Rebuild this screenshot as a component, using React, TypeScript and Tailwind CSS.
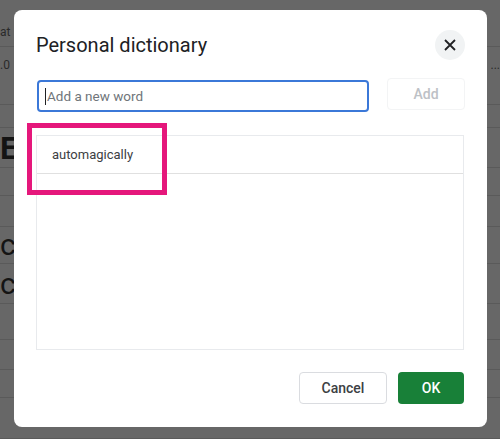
import React from "react";

const sheetRows = [
  { h: 47, left: "at", right: "", align: "items-end pb-[8px]" },
  { h: 58, left: ".0", right: "...", align: "items-start pt-[12px]" },
  { h: 23, left: "", right: "", align: "items-center" },
  { h: 40, left: "E", right: "", big: true, bold: true, align: "items-center" },
  { h: 28, left: "", right: "", align: "items-center" },
  { h: 31, left: "", right: "", align: "items-center" },
  { h: 37, left: "ca", right: "", big: true, align: "items-center" },
  { h: 40, left: "ca", right: "", big: true, align: "items-center" },
  { h: 36, left: "", right: "", align: "items-center" },
  { h: 30, left: "", right: "", align: "items-center" },
  { h: 28, left: "", right: "", align: "items-center" },
  { h: 41, left: "", right: "", align: "items-center" },
];

function SheetBackground() {
  return (
    <div className="flex flex-col w-full h-full">
      {sheetRows.map((r, i) => (
        <div
          key={i}
          className={`flex justify-between border-b border-[#5a5a5a] shrink-0 ${r.align}`}
          style={{ height: r.h }}
        >
          <span
            className={
              r.big
                ? r.bold
                  ? "text-[32px] leading-none font-bold text-[#141414]"
                  : "text-[30px] leading-none text-[#141414]"
                : "text-[12px] leading-none text-[#2a2a2a]"
            }
          >
            {r.left}
          </span>
          <span className="text-[12px] leading-none text-[#2a2a2a]">{r.right}</span>
        </div>
      ))}
    </div>
  );
}

export default function App() {
  return (
    <div
      className="relative w-[500px] h-[439px] overflow-hidden bg-[#676767]"
      style={{ fontFamily: "Roboto, 'Liberation Sans', sans-serif" }}
    >
      <SheetBackground />

      {/* Dialog */}
      <div className="absolute left-[14px] top-[10px] w-[473px] h-[417px] rounded-lg bg-white pl-[22px] pr-[22px] pt-[20px] pb-[23px] flex flex-col">
        <div className="flex items-center justify-between h-[30px]">
          <h2 className="text-[20px] leading-7 text-[#202124]">Personal dictionary</h2>
          <button className="w-[30px] h-[30px] rounded-full bg-[#f1f3f4] flex items-center justify-center">
            <svg width="14" height="14" viewBox="0 0 14 14">
              <path d="M2 2 L12 12 M12 2 L2 12" stroke="#202124" strokeWidth="1.8" />
            </svg>
          </button>
        </div>

        <div className="flex items-start mt-[18px] gap-[18px]">
          <div className="w-[333px] h-[32px] mt-[2px] ml-[1px] rounded border-2 border-[#3b78d8] flex items-center px-[6px]">
            <span className="w-px h-[17px] bg-[#202124]" />
            <span className="text-[13.5px] text-[#70757a] ml-px">Add a new word</span>
          </div>
          <button className="w-[78px] h-[32px] rounded border border-[#f3f4f5] text-[14px] text-[#bdc1c6] font-medium">
            Add
          </button>
        </div>

        <div className="mt-[23px] h-[215px] border border-[#e8eaed] mr-px">
          <div className="h-[38px] border-b border-[#e0e0e0] flex items-center pl-[15px] text-[13px] text-[#3c4043]">
            automagically
          </div>
        </div>

        <div className="flex justify-end gap-[11px] mt-auto mr-px">
          <button className="w-[88px] h-[32px] rounded border border-[#dadce0] bg-white text-[14px] font-medium text-[#3c4043]">
            Cancel
          </button>
          <button className="w-[66px] h-[32px] rounded bg-[#188038] text-[14px] font-medium text-white">
            OK
          </button>
        </div>
      </div>

      {/* Highlight annotation */}
      <div className="absolute left-[27px] top-[123px] w-[140px] h-[72px] border-[5px] border-[#e5177b]" />
    </div>
  );
}
